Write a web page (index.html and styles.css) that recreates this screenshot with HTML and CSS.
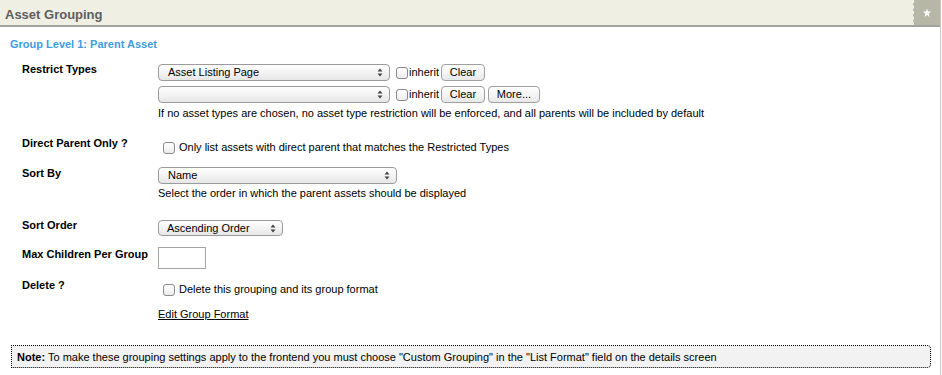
FILE: index.html
```html
<!DOCTYPE html>
<html lang="en">
<head>
    <meta charset="UTF-8">
    <title>Asset Grouping</title>
    <link rel="stylesheet" href="styles.css">
</head>
<body>
    <div class="panel">
        <div class="panel-header">
            <div class="panel-title">Asset Grouping</div>
            <div class="panel-star">
                <svg width="10" height="10" viewBox="0 0 10 10"><path d="M5 0.5 L6 3.6 L9.3 3.6 L6.6 5.6 L7.6 8.9 L5 6.9 L2.4 8.9 L3.4 5.6 L0.7 3.6 L4 3.6 Z" fill="#fff"/></svg>
            </div>
        </div>

        <h2 class="group-title">Group Level 1: Parent Asset</h2>

        <div class="form">
            <div class="row row-restrict">
                <div class="label">Restrict Types</div>
                <div class="value">
                    <div class="line">
                        <div class="select w-restrict"><span>Asset Listing Page</span><svg class="arrows" width="6" height="9" viewBox="0 0 6 9"><path d="M3 0.5 L5.5 3.5 L0.5 3.5 Z M3 8.5 L5.5 5.5 L0.5 5.5 Z" fill="#444"/></svg></div>
                        <span class="check"></span><span class="inherit">inherit</span>
                        <span class="button btn-clear">Clear</span>
                    </div>
                    <div class="line line-2">
                        <div class="select w-restrict"><span></span><svg class="arrows" width="6" height="9" viewBox="0 0 6 9"><path d="M3 0.5 L5.5 3.5 L0.5 3.5 Z M3 8.5 L5.5 5.5 L0.5 5.5 Z" fill="#444"/></svg></div>
                        <span class="check"></span><span class="inherit">inherit</span>
                        <span class="button btn-clear">Clear</span>
                        <span class="button btn-more">More...</span>
                    </div>
                    <div class="help help-restrict">If no asset types are chosen, no asset type restriction will be enforced, and all parents will be included by default</div>
                </div>
            </div>

            <div class="row row-direct">
                <div class="label">Direct Parent Only ?</div>
                <div class="value pad-check">
                    <div class="line"><span class="check check-indent"></span><span>Only list assets with direct parent that matches the Restricted Types</span></div>
                </div>
            </div>

            <div class="row row-sortby">
                <div class="label">Sort By</div>
                <div class="value">
                    <div class="select w-sortby"><span>Name</span><svg class="arrows" width="6" height="9" viewBox="0 0 6 9"><path d="M3 0.5 L5.5 3.5 L0.5 3.5 Z M3 8.5 L5.5 5.5 L0.5 5.5 Z" fill="#444"/></svg></div>
                    <div class="help help-sortby">Select the order in which the parent assets should be displayed</div>
                </div>
            </div>

            <div class="row row-order">
                <div class="label">Sort Order</div>
                <div class="value">
                    <div class="select select-small w-order"><span>Ascending Order</span><svg class="arrows" width="6" height="9" viewBox="0 0 6 9"><path d="M3 0.5 L5.5 3.5 L0.5 3.5 Z M3 8.5 L5.5 5.5 L0.5 5.5 Z" fill="#444"/></svg></div>
                </div>
            </div>

            <div class="row row-max">
                <div class="label label-max">Max Children Per Group</div>
                <div class="value">
                    <div class="textbox"></div>
                </div>
            </div>

            <div class="row row-delete">
                <div class="label">Delete ?</div>
                <div class="value pad-delete">
                    <div class="line"><span class="check check-indent"></span><span>Delete this grouping and its group format</span></div>
                </div>
            </div>

            <div class="row row-edit">
                <div class="label"></div>
                <div class="value"><a href="#" class="link">Edit Group Format</a></div>
            </div>
        </div>

        <div class="note"><b>Note:</b> To make these grouping settings apply to the frontend you must choose "Custom Grouping" in the "List Format" field on the details screen</div>
    </div>
</body>
</html>
```

FILE: styles.css
```css
body {
    margin: 0;
    font-family: "Liberation Sans", Arial, sans-serif;
    font-size: 11px;
    color: #000;
    background: #fff;
}
.panel {
    width: 941px;
    height: 375px;
    box-sizing: border-box;
    border-right: 1px solid #c8c8c8;
}
.panel-header {
    display: flex;
    justify-content: space-between;
    height: 25px;
    background: #efefe4;
    border-bottom: 2px solid #a3a3a0;
}
.panel-title {
    padding: 7px 0 0 5px;
    font-size: 13px;
    font-weight: bold;
    color: #5e5e5e;
}
.panel-star {
    width: 26px;
    display: flex;
    align-items: center;
    justify-content: center;
    background: #b7b7a8;
    border-left: 1px dashed #f4f4ee;
}
.group-title {
    margin: 11px 0 0 10px;
    font-size: 11px;
    line-height: 13px;
    font-weight: bold;
    color: #3c9de0;
}
.form {
    padding-left: 22px;
}
.row {
    display: grid;
    grid-template-columns: 136px 1fr;
    line-height: 13px;
}
.label {
    font-weight: bold;
}
.row-restrict { margin-top: 12px; }
.row-direct { margin-top: 17px; }
.row-sortby { margin-top: 13px; }
.row-order { margin-top: 19px; }
.row-max { margin-top: 11px; }
.row-delete { margin-top: 10px; }
.row-edit { margin-top: 12px; }
.label-max { padding-top: 1px; }
.line {
    display: flex;
    align-items: center;
}
.line-2 { margin-top: 5px; }
.row-restrict .value { padding-top: 1px; }
.row-order .value { padding-top: 1px; }
.pad-check { padding-top: 4px; }
.pad-delete { padding-top: 4px; }
.select {
    display: flex;
    align-items: center;
    justify-content: space-between;
    box-sizing: border-box;
    height: 17px;
    padding: 0 6px 0 9px;
    border: 1px solid #9b9b9b;
    border-radius: 4px;
    background: linear-gradient(#ffffff, #f1f1f1 60%, #e6e6e6);
}
.select-small { height: 16px; }
.w-restrict { width: 232px; }
.w-sortby { width: 239px; }
.w-order { width: 125px; padding-left: 8px; }
.check {
    display: inline-block;
    box-sizing: border-box;
    width: 12px;
    height: 12px;
    margin: 0 1px 0 6px;
    border: 1px solid #8a8a8a;
    border-radius: 3px;
    background: linear-gradient(#ffffff, #ececec);
}
.check-indent {
    margin: 0 4px 0 5px;
}
.inherit {
    margin-right: 2px;
}
.button {
    display: inline-flex;
    align-items: center;
    justify-content: center;
    box-sizing: border-box;
    height: 17px;
    border: 1px solid #a0a0a0;
    border-radius: 4px;
    background: linear-gradient(#ffffff, #f2f2f2 60%, #e8e8e8);
}
.btn-clear { width: 44px; }
.btn-more { width: 52px; margin-left: 3px; }
.help-restrict { margin-top: 4px; }
.help-sortby { margin-top: 3px; }
.textbox {
    box-sizing: border-box;
    width: 48px;
    height: 22px;
    border: 1px solid #a5a5a5;
    background: #fff;
}
.link {
    color: #000;
    text-decoration: underline;
}
.note {
    margin: 24px 9px 0 11px;
    box-sizing: border-box;
    height: 23px;
    padding: 5px 0 0 5px;
    line-height: 13px;
    background: #f2f2f2;
    border: 1px dotted #000;
    border-radius: 0 4px 4px 0;
}
```
